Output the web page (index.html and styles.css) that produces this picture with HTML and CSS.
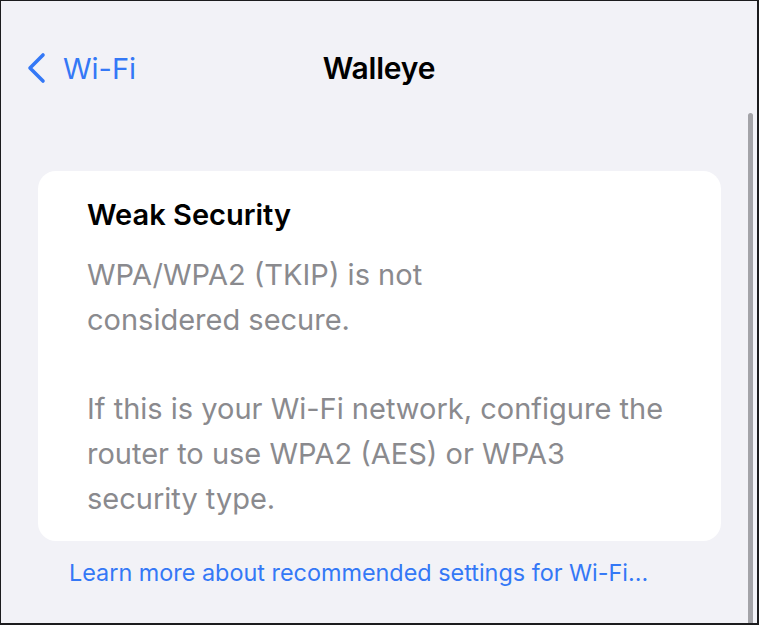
FILE: index.html
```html
<!DOCTYPE html>
<html lang="en">
<head>
    <meta charset="UTF-8">
    <meta name="viewport" content="width=device-width, initial-scale=1.0">
    <title>Walleye</title>
    <link rel="stylesheet" href="styles.css">
</head>
<body>

    <div class="screen">
        <!-- Navigation bar -->
        <div class="nav-bar">
            <a class="back-link" href="#">
                <svg class="chevron" width="22" height="32" viewBox="0 0 22 32">
                    <path d="M18 3 L5 16 L18 29" fill="none" stroke="#3478f6" stroke-width="3.6" stroke-linecap="round" stroke-linejoin="round"/>
                </svg>
                <span>Wi-Fi</span>
            </a>
            <div class="nav-title">Walleye</div>
            <div></div>
        </div>

        <!-- Warning card -->
        <div class="card">
            <h2>Weak Security</h2>
            <p>WPA/WPA2 (TKIP) is not<br>considered secure.</p>
            <p>If this is your Wi-Fi network, configure the<br>router to use WPA2 (AES) or WPA3<br>security type.</p>
        </div>

        <a class="learn-more" href="#">Learn more about recommended settings for Wi-Fi...</a>

        <div class="scrollbar"></div>
    </div>

</body>
</html>
```

FILE: styles.css
```css
/* Basic Reset */
* {
    margin: 0;
    padding: 0;
    box-sizing: border-box;
}

body {
    font-family: 'Inter', 'Liberation Sans', sans-serif;
    background-color: #1c1c1e;
}

/* Screen frame */
.screen {
    position: relative;
    width: 759px;
    height: 625px;
    background-color: #f2f2f7;
    border-top: 1px solid #1c1c1e;
    border-left: 1px solid #1c1c1e;
    border-right: 2px solid #1c1c1e;
    border-bottom: 2px solid #1c1c1e;
    overflow: hidden;
}

/* Navigation bar */
.nav-bar {
    display: grid;
    grid-template-columns: 1fr auto 1fr;
    align-items: center;
    height: 66px;
    margin-top: 34px;
}

.back-link {
    display: flex;
    align-items: center;
    gap: 16px;
    margin-left: 24px;
    color: #3478f6;
    text-decoration: none;
    font-size: 29px;
}

.nav-title {
    font-size: 30px;
    font-weight: 600;
    color: #000;
    letter-spacing: -0.2px;
}

/* Card */
.card {
    margin: 70px 36px 0 37px;
    background-color: #fff;
    border-radius: 18px;
    padding: 24px 49px 20px;
}

.card h2 {
    font-size: 29px;
    font-weight: 600;
    color: #000;
    line-height: 40px;
    margin-bottom: 17px;
}

.card p {
    font-size: 29px;
    line-height: 45px;
    color: #8a8a8e;
    white-space: nowrap;
}

.card p + p {
    margin-top: 44px;
}

/* Footer link */
.learn-more {
    display: block;
    margin: 17px 0 0 68px;
    font-size: 23.4px;
    line-height: 30px;
    color: #3478f6;
    text-decoration: none;
}

/* Scroll indicator */
.scrollbar {
    position: absolute;
    top: 112px;
    right: 4px;
    width: 5px;
    height: 520px;
    border-radius: 3px 3px 0 0;
    background-color: #a3a3a8;
}
```
